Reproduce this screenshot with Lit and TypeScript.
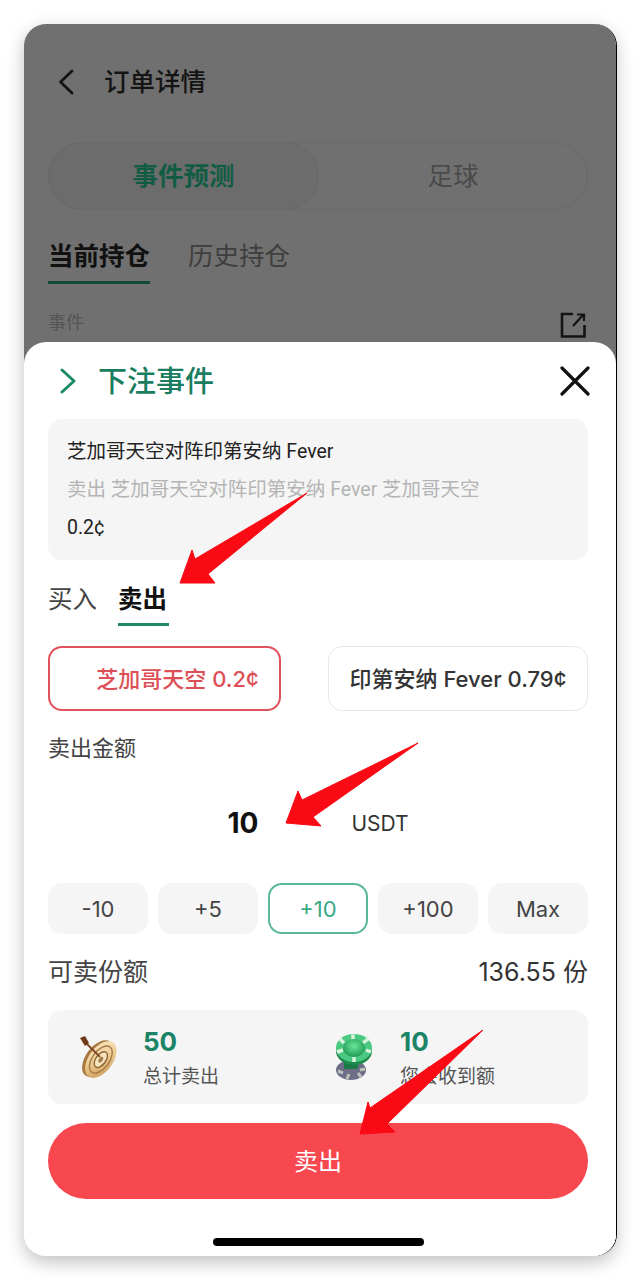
import { LitElement, html, css, svg } from 'lit';
import { customElement, state } from 'lit/decorators.js';

const AMOUNTS = ['-10', '+5', '+10', '+100', 'Max'];

// red annotation arrows that lie on top of the screenshot
const ARROWS = [
  '307,493 195,559 192,550 180,583 215,583 208,574',
  '418,743 302,800 298,791 286,823 321,826 313,817',
  '483,1030 370,1108 368,1102 360,1134 395,1132 387,1124',
];

const targetIcon = svg`
  <svg class="icon" width="46" height="48" viewBox="0 0 46 48">
    <defs>
      <linearGradient id="gold" x1="0" y1="0" x2="1" y2="1">
        <stop offset="0" stop-color="#fbeccb" />
        <stop offset="0.5" stop-color="#ecca90" />
        <stop offset="1" stop-color="#c4924f" />
      </linearGradient>
    </defs>
    <g transform="rotate(36 24 26)">
      <ellipse cx="22" cy="27" rx="12" ry="21" fill="#a87a40" />
      <ellipse cx="25" cy="26" rx="12" ry="21" fill="url(#gold)" />
      <ellipse cx="25" cy="26" rx="8.500" ry="15.500" fill="none" stroke="#a67a45" stroke-width="1.400" />
      <ellipse cx="25" cy="26" rx="5" ry="9" fill="#f5e3bb" stroke="#8d6433" stroke-width="1.400" />
      <ellipse cx="25" cy="26" rx="1.800" ry="3.200" fill="#a67a45" />
    </g>
    <path d="M24 24 L10 10" stroke="#7c4a22" stroke-width="1.800" />
    <path d="M4 5 L9 3 L13 10 L9 13 Z" fill="#6e3a1a" />
  </svg>
`;

const chipIcon = svg`
  <svg class="icon" width="42" height="50" viewBox="0 0 42 50">
    <defs>
      <radialGradient id="felt" cx="0.5" cy="0.4" r="0.6">
        <stop offset="0" stop-color="#6be79a" />
        <stop offset="1" stop-color="#1f9a55" />
      </radialGradient>
    </defs>
    <ellipse cx="18" cy="37" rx="15" ry="10" fill="#6f6c88" />
    <path d="M5 38 l5 2 M14 46 l2 -5 M28 44 l-3 -4 M32 36 l-5 1" stroke="#b9c4b8" stroke-width="3" />
    <rect x="11" y="22" width="14" height="14" fill="#1b7a44" />
    <ellipse cx="21" cy="18" rx="18" ry="14" fill="#1d8a4e" />
    <ellipse cx="21" cy="15" rx="18" ry="14" fill="#4bc983" />
    <path d="M7 6 l4 4 M20 1.500 v5 M35 6 l-5 4 M38 19 l-5 -2 M4 19 l6 -2 M21 29 v-5" stroke="#d8f2dd" stroke-width="3.500" />
    <ellipse cx="21" cy="15" rx="11" ry="9" fill="url(#felt)" />
  </svg>
`;

@customElement('app-root')
export class AppRoot extends LitElement {
  @state() private selected = '+10';

  static styles = css`
    :host {
      display: block;
      width: 640px;
      height: 1280px;
      position: relative;
      padding: 24px;
      box-sizing: border-box;
      background: #fff;
      font-family: Inter, 'Noto Sans CJK SC', sans-serif;
      color: #222;
    }
    .frame {
      display: flex;
      flex-direction: column;
      height: 1232px;
      border-radius: 22px;
      overflow: hidden;
      background: linear-gradient(#707070 400px, #fff 400px);
      box-shadow: 1px 0 0 #000, 0 6px 18px rgba(0, 0, 0, 0.25);
    }
    .behind {
      height: 318px;
      flex: none;
      overflow: hidden;
      box-sizing: border-box;
      padding: 38px 28px 0 24px;
    }
    .topbar {
      display: flex;
      align-items: center;
      gap: 31px;
      height: 40px;
      padding-left: 10px;
      font-size: 25.500px;
      font-weight: 500;
      line-height: 38px;
      color: #141414;
    }
    .topbar span {
      margin-left: -1px;
    }
    .segment {
      display: grid;
      grid-template-columns: 270px 1fr;
      height: 68px;
      margin-top: 40px;
      box-sizing: border-box;
      border: 1px solid #696969;
      border-radius: 34px;
      font-size: 25.500px;
      line-height: 66px;
      text-align: center;
      color: #4a4a4a;
    }
    .segment .on {
      margin: -1px 0 -1px -1px;
      background: #6c6c6c;
      border: 1px solid #696969;
      border-radius: 34px;
      color: #125c44;
      font-weight: 700;
    }
    .hold-tabs {
      display: flex;
      gap: 38px;
      margin-top: 28px;
      font-size: 25.500px;
      line-height: 36px;
      color: #3e3e3e;
    }
    .hold-tabs span {
      padding-bottom: 7px;
      border-bottom: 3px solid transparent;
    }
    .hold-tabs .on {
      color: #111;
      font-weight: 700;
      border-bottom-color: #124a38;
    }
    .event {
      display: flex;
      justify-content: space-between;
      align-items: flex-end;
      height: 30px;
      margin-top: 24px;
      padding-right: 2px;
      font-size: 18px;
      line-height: 30px;
      color: #555;
    }
    .sheet {
      flex: 1;
      padding: 0 28px 0 24px;
      background: #fff;
      border-radius: 22px 22px 0 0;
    }
    .sheet-head {
      display: flex;
      align-items: center;
      height: 77px;
      padding-left: 12px;
      font-size: 29px;
      font-weight: 500;
      color: #1a7d5f;
    }
    .sheet-head .close {
      margin: 0 -2px 0 auto;
    }
    .sheet-head .title {
      margin: -4px 0 0 22px;
    }
    .summary {
      padding: 14px 19px 13px;
      border-radius: 14px;
      background: #f5f5f5;
      font-family: Roboto, 'Noto Sans CJK SC', sans-serif;
      font-size: 19.500px;
      line-height: 38px;
      color: #222;
    }
    .summary .muted {
      color: #b4b4b4;
    }
    .side-tabs {
      display: flex;
      gap: 19px;
      margin-top: 22px;
      font-size: 24.500px;
      line-height: 34px;
      color: #444;
    }
    .side-tabs span {
      padding: 0 2px 7px 0;
      border-bottom: 3px solid transparent;
    }
    .side-tabs .on {
      color: #111;
      font-weight: 700;
      border-bottom-color: #1f8a6a;
    }
    .options {
      display: grid;
      grid-template-columns: 233px 1fr;
      gap: 47px;
      margin-top: 20px;
      font-size: 22px;
      font-weight: 500;
    }
    .option {
      display: flex;
      align-items: center;
      justify-content: center;
      height: 65px;
      padding-bottom: 3px;
      box-sizing: border-box;
      border: 1px solid #e8e8e8;
      border-radius: 14px;
      color: #333;
      white-space: nowrap;
    }
    .option.on {
      padding-left: 26px;
      border: 2.500px solid #e0525c;
      color: #dd4f57;
    }
    .label {
      margin-top: 22px;
      font-size: 22px;
      line-height: 30px;
      color: #444;
    }
    .amount {
      display: flex;
      align-items: center;
      justify-content: center;
      gap: 93px;
      height: 120px;
      font-size: 21px;
      color: #333;
    }
    .amount b {
      font-size: 28px;
      font-weight: 700;
      color: #111;
    }
    .chips {
      display: grid;
      grid-template-columns: repeat(5, 1fr);
      gap: 10px;
    }
    .chip {
      height: 51px;
      box-sizing: border-box;
      border-radius: 14px;
      background: #f5f5f5;
      font-size: 22px;
      line-height: 53px;
      text-align: center;
      color: #444;
    }
    .chip.on {
      border: 2px solid #5ab89a;
      background: #fff;
      line-height: 49px;
      color: #3aa884;
    }
    .balance {
      display: flex;
      justify-content: space-between;
      margin-top: 20px;
      font-size: 25px;
      line-height: 36px;
      color: #333;
    }
    .balance span:first-child {
      color: #444;
    }
    .stats {
      display: grid;
      grid-template-columns: 257px 1fr;
      height: 94px;
      margin-top: 20px;
      padding: 17px 0 0 30px;
      box-sizing: border-box;
      border-radius: 14px;
      background: #f5f5f5;
    }
    .stat {
      display: grid;
      grid-template-columns: 65px 1fr;
      align-items: start;
    }
    .stat .icon {
      margin: 6px 0 0 -2px;
    }
    .stat b {
      display: block;
      font-size: 26px;
      font-weight: 700;
      line-height: 30px;
      color: #1b8466;
    }
    .stat small {
      display: block;
      margin-top: 5px;
      font-size: 19px;
      line-height: 30px;
      color: #555;
    }
    .sell {
      height: 76px;
      margin-top: 19px;
      border-radius: 38px;
      background: #f7474f;
      font-size: 24px;
      line-height: 78px;
      text-align: center;
      color: #fff;
    }
    .home {
      width: 211px;
      height: 8px;
      margin: 39px auto 0;
      border-radius: 4px;
      background: #000;
    }
    .arrows {
      position: absolute;
      top: 0;
      left: 0;
      pointer-events: none;
    }
  `;

  render() {
    return html`
      <div class="frame">
        <div class="behind">
          <div class="topbar">
            <svg width="16" height="26" viewBox="0 0 16 26" fill="none" stroke="#141414" stroke-width="2.800" stroke-linecap="round" stroke-linejoin="round"><path d="M14 2 L2.500 13 L14 24" /></svg>
            <span>订单详情</span>
          </div>
          <div class="segment"><span class="on">事件预测</span><span>足球</span></div>
          <div class="hold-tabs"><span class="on">当前持仓</span><span>历史持仓</span></div>
          <div class="event">
            <span>事件</span>
            <svg width="26" height="26" viewBox="0 0 26 26" fill="none" stroke="#141414" stroke-width="2.600"><path d="M13 2 H2 V24.500 H24.500 V13" /><path d="M13 14 L23 3 M17 2.500 H24 V9" stroke-width="2.200" /></svg>
          </div>
        </div>
        <div class="sheet">
          <div class="sheet-head">
            <svg width="16" height="26" viewBox="0 0 16 26" fill="none" stroke="#1a8a68" stroke-width="3" stroke-linecap="round" stroke-linejoin="round"><path d="M2 2 L14 13 L2 24" /></svg>
            <span class="title">下注事件</span>
            <svg class="close" width="30" height="30" viewBox="0 0 30 30" fill="none" stroke="#111" stroke-width="3.200" stroke-linecap="round"><path d="M2 2 L28 28 M28 2 L2 28" /></svg>
          </div>
          <div class="summary">
            <div>芝加哥天空对阵印第安纳 Fever</div>
            <div class="muted">卖出 芝加哥天空对阵印第安纳 Fever 芝加哥天空</div>
            <div>0.2¢</div>
          </div>
          <div class="side-tabs"><span>买入</span><span class="on">卖出</span></div>
          <div class="options">
            <div class="option on">芝加哥天空 0.2¢</div>
            <div class="option">印第安纳 Fever 0.79¢</div>
          </div>
          <div class="label">卖出金额</div>
          <div class="amount"><b>10</b><span>USDT</span></div>
          <div class="chips">
            ${AMOUNTS.map((a) => html`<div class="chip ${a === this.selected ? 'on' : ''}">${a}</div>`)}
          </div>
          <div class="balance"><span>可卖份额</span><span>136.55 份</span></div>
          <div class="stats">
            <div class="stat">
              ${targetIcon}
              <div><b>50</b><small>总计卖出</small></div>
            </div>
            <div class="stat">
              ${chipIcon}
              <div><b>10</b><small>您会收到额</small></div>
            </div>
          </div>
          <div class="sell">卖出</div>
          <div class="home"></div>
        </div>
      </div>
      <svg class="arrows" width="640" height="1280" viewBox="0 0 640 1280">
        ${ARROWS.map((p) => svg`<polygon points=${p} fill="#fa0a14" stroke="#fa0a14" stroke-width="1" stroke-linejoin="round" />`)}
      </svg>
    `;
  }
}
